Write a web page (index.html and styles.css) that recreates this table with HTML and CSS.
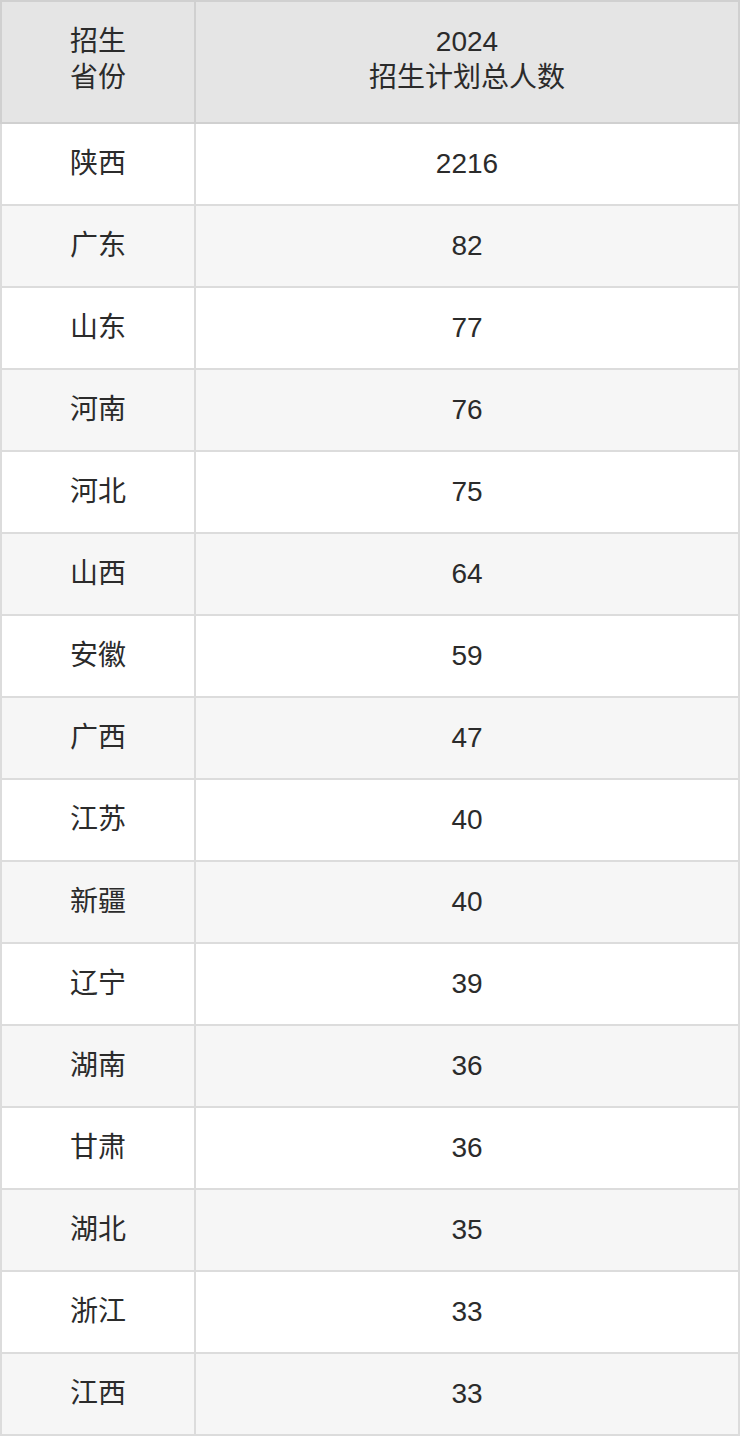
FILE: index.html
```html
<!DOCTYPE html>
<html lang="zh">
<head>
<meta charset="utf-8">
<title>招生计划</title>
<link rel="stylesheet" href="styles.css">
</head>
<body>
<table class="plan">
  <thead>
    <tr><th class="col-prov"><span class="head-text">招生<br>省份</span></th><th class="col-num"><span class="head-text">2024<br>招生计划总人数</span></th></tr>
  </thead>
  <tbody>
    <tr><td>陕西</td><td>2216</td></tr>
    <tr><td>广东</td><td>82</td></tr>
    <tr><td>山东</td><td>77</td></tr>
    <tr><td>河南</td><td>76</td></tr>
    <tr><td>河北</td><td>75</td></tr>
    <tr><td>山西</td><td>64</td></tr>
    <tr><td>安徽</td><td>59</td></tr>
    <tr><td>广西</td><td>47</td></tr>
    <tr><td>江苏</td><td>40</td></tr>
    <tr><td>新疆</td><td>40</td></tr>
    <tr><td>辽宁</td><td>39</td></tr>
    <tr><td>湖南</td><td>36</td></tr>
    <tr><td>甘肃</td><td>36</td></tr>
    <tr><td>湖北</td><td>35</td></tr>
    <tr><td>浙江</td><td>33</td></tr>
    <tr><td>江西</td><td>33</td></tr>
  </tbody>
</table>
</body>
</html>
```
FILE: styles.css
```css
html, body {
  margin: 0;
  padding: 0;
  background: #ffffff;
}
.plan {
  width: 740px;
  border-collapse: collapse;
  table-layout: fixed;
  font-family: "Liberation Sans", "Noto Sans CJK SC", sans-serif;
  font-size: 28px;
  color: #2b2b2b;
}
.plan th, .plan td {
  border: 2px solid #dcdcdc;
  text-align: center;
  vertical-align: middle;
  padding: 0;
  font-weight: normal;
}
.plan th {
  background: #e5e5e5;
  height: 120px;
  line-height: 36px;
  border-color: #d0d0d0;
}
.head-text {
  display: inline-block;
  padding-bottom: 4px;
}
.plan td {
  height: 80px;
  line-height: 36px;
}
.col-prov { width: 192px; }
.plan tbody tr:nth-child(even) td { background: #f6f6f6; }
```
